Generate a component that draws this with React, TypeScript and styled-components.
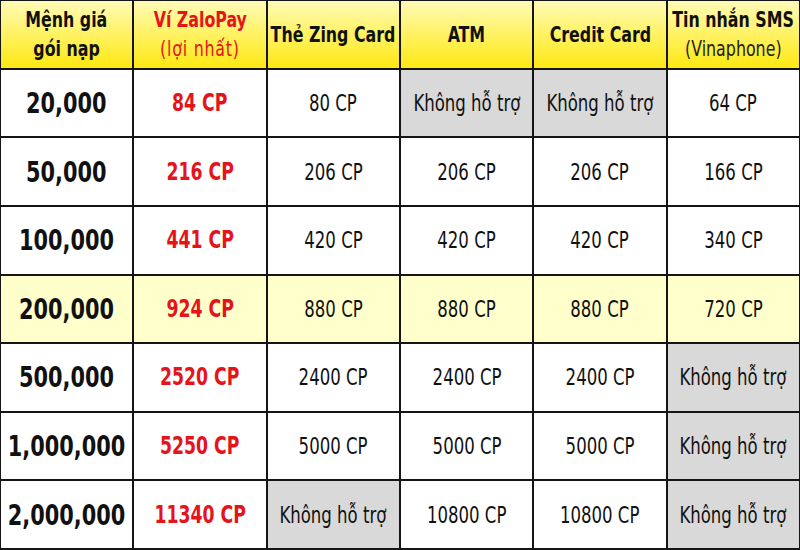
import styled, { createGlobalStyle } from "styled-components";

const GlobalStyle = createGlobalStyle`
  html, body {
    margin: 0;
    padding: 0;
    background: #ffffff;
  }
  body {
    font-family: "DejaVu Sans Condensed", "Liberation Sans Narrow", "Liberation Sans", sans-serif;
    font-stretch: condensed;
  }
`;

const Table = styled.div`
  width: 800px;
  height: 550px;
  box-sizing: border-box;
  display: grid;
  grid-template-columns: repeat(6, minmax(0, 1fr));
  grid-template-rows: repeat(8, minmax(0, 1fr));
  gap: 2px;
  padding: 1px 1px 2px 1px;
  background: #151515;
`;

// the reference uses a narrow DIN-like face, so squeeze the condensed font a bit more
const Text = styled.span`
  display: inline-block;
  white-space: nowrap;
  transform: scaleX(0.8);
  transform-origin: center;
`;

const HeaderCell = styled.div`
  display: flex;
  flex-direction: column;
  align-items: center;
  justify-content: center;
  background: linear-gradient(180deg, #fffbb8 0%, #fff36a 45%, #ffe812 100%);
  color: #111;
  font-weight: 700;
  font-size: 22px;
  line-height: 29px;
  text-align: center;
`;

const HeaderTitle = styled(Text)<{ $red?: boolean }>`
  color: ${(p) => (p.$red ? "#e5141b" : "#111")};
`;

const SubLabel = styled(Text)<{ $red?: boolean }>`
  font-weight: 400;
  font-size: 22px;
  letter-spacing: ${(p) => (p.$red ? "1px" : "0")};
  color: ${(p) => (p.$red ? "#e5141b" : "#222")};
`;

type Tone = "plain" | "highlight" | "none";
type Kind = "amount" | "best" | "value";

const Cell = styled.div<{ $tone: Tone; $kind: Kind }>`
  display: flex;
  align-items: center;
  justify-content: center;
  background: ${(p) =>
    p.$tone === "none" ? "#d9d9d9" : p.$tone === "highlight" ? "#ffffcc" : "#ffffff"};
  color: ${(p) => (p.$kind === "best" ? "#e5141b" : "#111")};
  font-weight: ${(p) => (p.$kind === "value" ? 400 : 700)};
  font-size: ${(p) => (p.$kind === "amount" ? "29px" : p.$kind === "best" ? "24px" : "23px")};
`;

const NA = "Không hỗ trợ";

const rows: { amount: string; best: string; values: string[]; highlight?: boolean }[] = [
  { amount: "20,000", best: "84 CP", values: ["80 CP", NA, NA, "64 CP"] },
  { amount: "50,000", best: "216 CP", values: ["206 CP", "206 CP", "206 CP", "166 CP"] },
  { amount: "100,000", best: "441 CP", values: ["420 CP", "420 CP", "420 CP", "340 CP"] },
  { amount: "200,000", best: "924 CP", values: ["880 CP", "880 CP", "880 CP", "720 CP"], highlight: true },
  { amount: "500,000", best: "2520 CP", values: ["2400 CP", "2400 CP", "2400 CP", NA] },
  { amount: "1,000,000", best: "5250 CP", values: ["5000 CP", "5000 CP", "5000 CP", NA] },
  { amount: "2,000,000", best: "11340 CP", values: [NA, "10800 CP", "10800 CP", NA] },
];

export default function App() {
  return (
    <>
      <GlobalStyle />
      <Table>
        <HeaderCell>
          <HeaderTitle>Mệnh giá</HeaderTitle>
          <HeaderTitle>gói nạp</HeaderTitle>
        </HeaderCell>
        <HeaderCell>
          <HeaderTitle $red>Ví ZaloPay</HeaderTitle>
          <SubLabel $red>(lợi nhất)</SubLabel>
        </HeaderCell>
        <HeaderCell>
          <HeaderTitle>Thẻ Zing Card</HeaderTitle>
        </HeaderCell>
        <HeaderCell>
          <HeaderTitle>ATM</HeaderTitle>
        </HeaderCell>
        <HeaderCell>
          <HeaderTitle>Credit Card</HeaderTitle>
        </HeaderCell>
        <HeaderCell>
          <HeaderTitle>Tin nhắn SMS</HeaderTitle>
          <SubLabel>(Vinaphone)</SubLabel>
        </HeaderCell>
        {rows.map((row) => {
          const tone: Tone = row.highlight ? "highlight" : "plain";
          return [
            <Cell key={row.amount + "a"} $tone={tone} $kind="amount">
              <Text>{row.amount}</Text>
            </Cell>,
            <Cell key={row.amount + "b"} $tone={tone} $kind="best">
              <Text>{row.best}</Text>
            </Cell>,
            ...row.values.map((v, i) => (
              <Cell key={row.amount + i} $tone={v === NA ? "none" : tone} $kind="value">
                <Text>{v}</Text>
              </Cell>
            )),
          ];
        })}
      </Table>
    </>
  );
}
